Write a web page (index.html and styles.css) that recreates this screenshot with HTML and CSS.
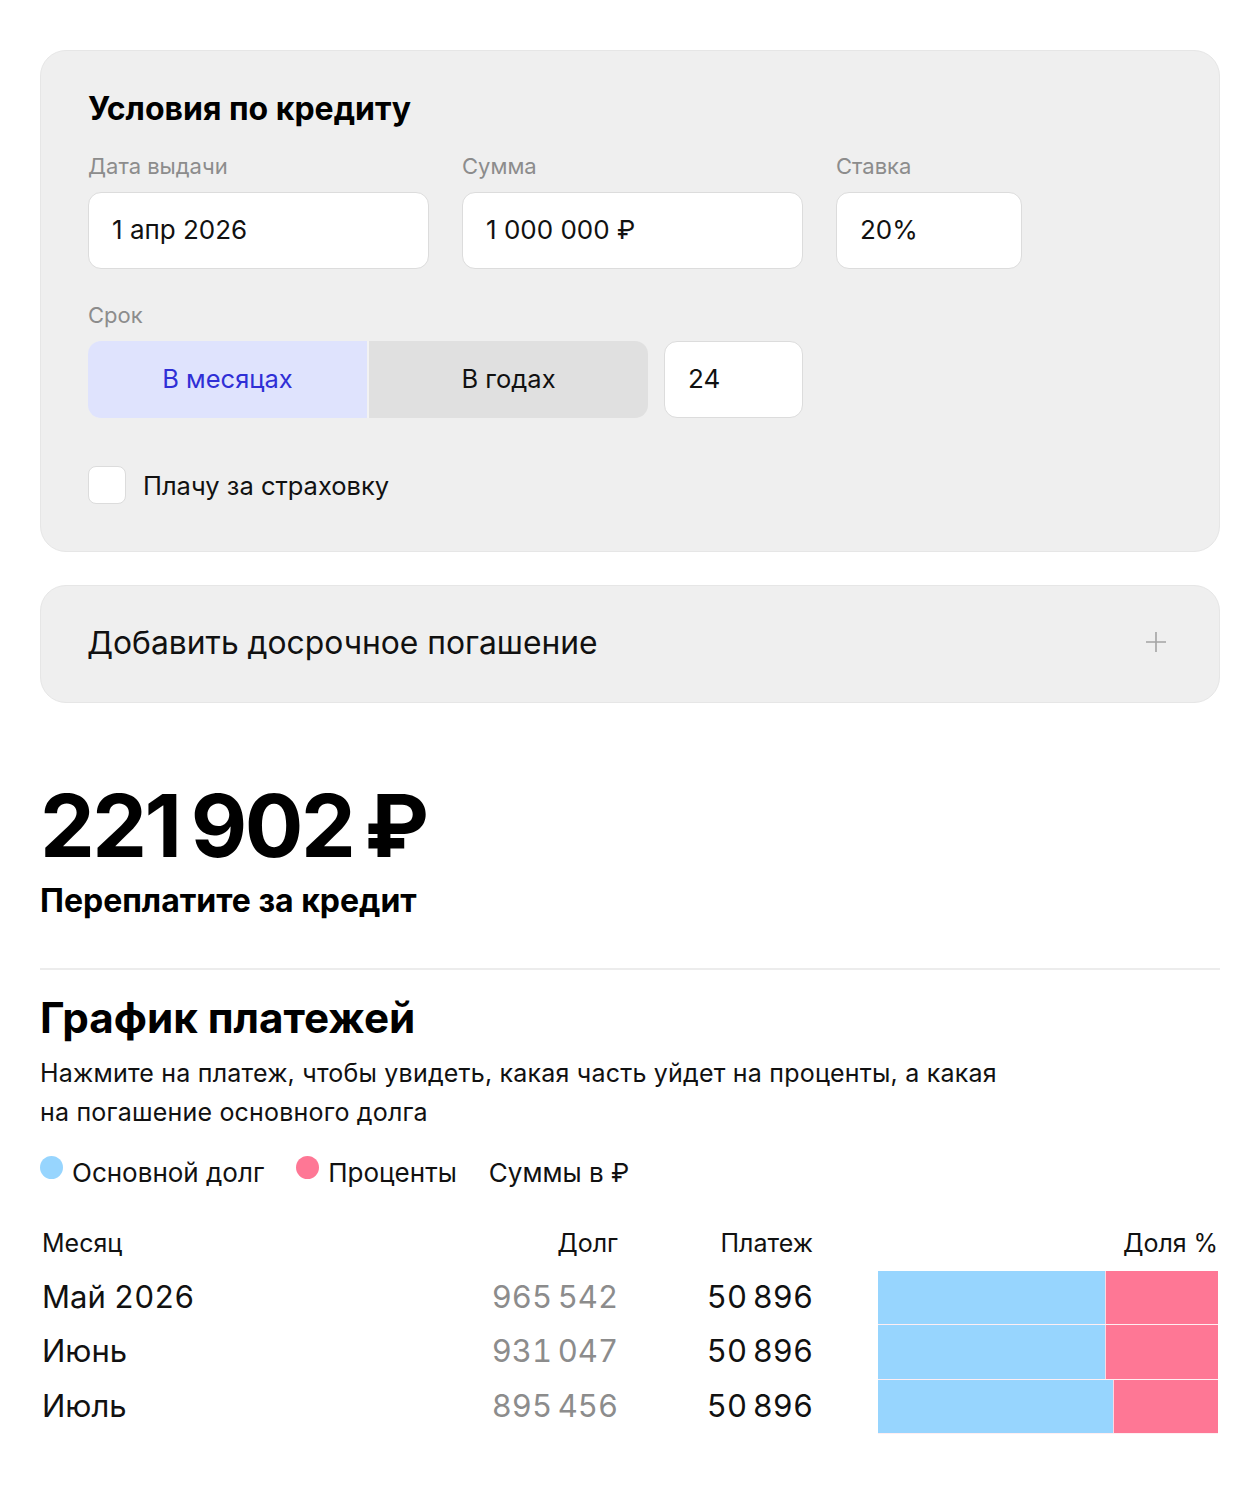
FILE: index.html
```html
<!DOCTYPE html>
<html lang="ru">
<head>
  <meta charset="utf-8">
  <meta name="viewport" content="width=device-width, initial-scale=1">
  <title>Кредитный калькулятор</title>
  <link rel="stylesheet" href="styles.css">
</head>
<body>
  <main>
    <section class="card conditions">
      <h2>Условия по кредиту</h2>
      <div class="fields">
        <div class="field field-date">
          <label for="date">Дата выдачи</label>
          <input id="date" class="input" type="text" value="1 апр 2026">
        </div>
        <div class="field field-sum">
          <label for="sum">Сумма</label>
          <input id="sum" class="input" type="text" value="1 000 000 ₽">
        </div>
        <div class="field field-rate">
          <label for="rate">Ставка</label>
          <input id="rate" class="input" type="text" value="20%">
        </div>
      </div>
      <div class="field">
        <label for="term">Срок</label>
        <div class="term">
          <div class="segment">
            <button class="segment-item active" type="button">В месяцах</button>
            <button class="segment-item" type="button">В годах</button>
          </div>
          <input id="term" class="input input-term" type="text" value="24">
        </div>
      </div>
      <label class="checkbox">
        <input type="checkbox">
        <span class="box"></span>
        <span>Плачу за страховку</span>
      </label>
    </section>

    <section class="card early">
      <span>Добавить досрочное погашение</span>
      <svg class="plus" width="24" height="24" viewBox="0 0 24 24">
        <path d="M12 2v20M2 12h20" stroke="#a4a4a4" stroke-width="1.6" fill="none"/>
      </svg>
    </section>

    <section class="total">
      <div class="total-sum">221&#8201;902&#8201;₽</div>
      <div class="total-label">Переплатите за кредит</div>
    </section>

    <hr class="divider">

    <section class="schedule">
      <h2>График платежей</h2>
      <p class="hint">Нажмите на платеж, чтобы увидеть, какая часть уйдет на проценты, а какая на погашение основного долга</p>
      <div class="legend">
        <span class="legend-item"><i class="dot dot-main"></i>Основной долг</span>
        <span class="legend-item"><i class="dot dot-percent"></i>Проценты</span>
        <span class="legend-item">Суммы в ₽</span>
      </div>

      <div class="table">
        <div class="th">Месяц</div>
        <div class="th num">Долг</div>
        <div class="th num">Платеж</div>
        <div class="th num last">Доля %</div>

        <div class="td">Май 2026</div>
        <div class="td num debt">965&#8201;542</div>
        <div class="td num">50&#8201;896</div>
        <div class="td bar-cell"><div class="bar"><span class="part-main" style="width: 67%"></span><span class="part-percent"></span></div></div>

        <div class="td">Июнь</div>
        <div class="td num debt">931&#8201;047</div>
        <div class="td num">50&#8201;896</div>
        <div class="td bar-cell"><div class="bar"><span class="part-main" style="width: 67%"></span><span class="part-percent"></span></div></div>

        <div class="td">Июль</div>
        <div class="td num debt">895&#8201;456</div>
        <div class="td num">50&#8201;896</div>
        <div class="td bar-cell"><div class="bar"><span class="part-main" style="width: 69.3%"></span><span class="part-percent"></span></div></div>
      </div>
    </section>
  </main>
</body>
</html>
```

FILE: styles.css
```css
* {
  box-sizing: border-box;
}
body {
  margin: 0;
  font-family: Inter, Roboto, "Liberation Sans", sans-serif;
  color: #000;
  background: #fff;
}
main {
  padding: 50px 40px 40px;
}
h2 {
  margin: 0;
}
.card {
  background: #efefef;
  border: 1px solid #e6e6e6;
  border-radius: 26px;
}
.conditions {
  padding: 40px 47px 47px;
}
.conditions h2 {
  font-size: 32px;
  line-height: 36px;
  font-weight: 700;
}
.fields {
  display: flex;
  gap: 33px;
  margin-top: 25px;
}
.field label {
  display: block;
  font-size: 22px;
  line-height: 28px;
  color: #8c8c8c;
  margin-bottom: 12px;
}
.field-date, .field-sum {
  width: 341px;
}
.field-rate {
  width: 186px;
}
.input {
  display: block;
  width: 100%;
  height: 77px;
  padding: 0 23px 3px;
  border: 1px solid #dcdcdc;
  border-radius: 13px;
  background: #fff;
  font-family: inherit;
  font-size: 26px;
  color: #111;
  outline: none;
}
.conditions > .field {
  margin-top: 32px;
}
.term {
  display: flex;
  gap: 16px;
}
.segment {
  display: flex;
  width: 560px;
  height: 77px;
  border-radius: 13px;
  overflow: hidden;
  gap: 2px;
  background: #f2f2f2;
}
.segment-item {
  flex: 1;
  border: 0;
  padding-bottom: 3px;
  background: #e0e0e0;
  font-family: inherit;
  font-size: 25.5px;
  color: #111;
}
.segment-item.active {
  background: #dfe3fd;
  color: #2f2fd6;
}
.input-term {
  width: 139px;
}
.checkbox {
  display: flex;
  align-items: center;
  gap: 17px;
  margin-top: 48px;
  font-size: 25.5px;
  color: #111;
}
.checkbox input {
  display: none;
}
.box {
  width: 38px;
  height: 38px;
  border: 1px solid #dcdcdc;
  border-radius: 8px;
  background: #fff;
}
.early {
  margin-top: 33px;
  height: 118px;
  padding: 0 48px 4px 46px;
  display: flex;
  align-items: center;
  justify-content: space-between;
  font-size: 31.8px;
  color: #111;
}
.plus {
  margin-right: 3px;
}
.total {
  margin-top: 79px;
}
.total-sum {
  font-size: 87px;
  line-height: 88px;
  font-weight: 700;
  letter-spacing: -2.5px;
}
.total-label {
  margin-top: 13px;
  font-size: 32px;
  line-height: 36px;
  font-weight: 700;
}
.divider {
  margin: 49px 0 0;
  border: 0;
  border-top: 2px solid #ececec;
}
.schedule h2 {
  margin-top: 24px;
  font-size: 42.2px;
  line-height: 48px;
  font-weight: 700;
}
.hint {
  margin: 12px 0 0;
  max-width: 985px;
  font-size: 25px;
  line-height: 39px;
  letter-spacing: 0.2px;
  color: #111;
}
.legend {
  display: flex;
  gap: 32px;
  margin-top: 23px;
  font-size: 26px;
  line-height: 36px;
  color: #111;
}
.legend-item {
  display: flex;
  align-items: flex-start;
}
.dot {
  width: 23px;
  height: 23px;
  border-radius: 50%;
  margin: 1px 9px 0 0;
}
.dot-main {
  background: #97d5fe;
}
.dot-percent {
  background: #fe7795;
}
.table {
  display: grid;
  grid-template-columns: 1fr 160px 195px 407px;
  margin-top: 37px;
  align-items: center;
  font-variant-numeric: tabular-nums;
}
.th {
  font-size: 25px;
  line-height: 30px;
  color: #111;
  padding: 0 2px 13px;
}
.td {
  font-size: 31px;
  height: 54.33px;
  line-height: 52px;
  padding: 0 2px;
  color: #111;
}
.num {
  text-align: right;
  padding-right: 0;
}
.th.last {
  padding-right: 2px;
}
.debt {
  color: #8c8c8c;
}
.bar-cell {
  padding: 0 2px 0 65px;
}
.bar {
  display: flex;
  height: 100%;
  border-bottom: 1px solid #ffeef2;
}
.part-main {
  background: #97d5fe;
  border-right: 1px solid #ffd6e0;
}
.part-percent {
  flex: 1;
  background: #fe7795;
}
```
